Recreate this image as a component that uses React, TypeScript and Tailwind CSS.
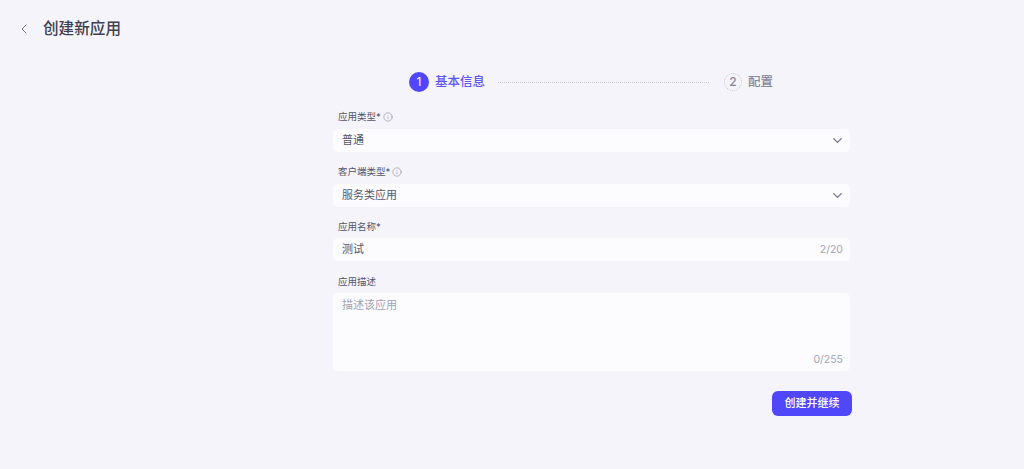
import React from "react";
import { ChevronDown, ChevronLeft, Info } from "lucide-react";

const FONT = "font-['Inter','Noto_Sans_CJK_SC',sans-serif]";

function Label({ text, info }: { text: string; info?: boolean }) {
  return (
    <div className="flex items-center h-[13px] pl-[5px] gap-[2px] text-[9.5px] leading-[13px] text-[#55566a]">
      <span>{text}</span>
      {info && <Info size={10} strokeWidth={1.25} className="text-[#77788a]" />}
    </div>
  );
}

function Select({ value }: { value: string }) {
  return (
    <div className="flex items-center justify-between h-[23px] mt-[6px] pl-[9px] pr-[5px] rounded-[5px] bg-[#fcfcfe] text-[11px] text-[#55566a]">
      <span>{value}</span>
      <ChevronDown size={15} strokeWidth={2.25} className="text-[#77788a]" />
    </div>
  );
}

export default function App() {
  return (
    <div className={`${FONT} w-[1024px] h-[469px] overflow-hidden bg-[#f4f4fa]`}>
      <header className="flex items-center h-[58px] pl-[16px]">
        <ChevronLeft size={16} strokeWidth={1.5} className="text-[#77788a]" />
        <h1 className="ml-[11px] text-[15.6px] font-medium text-[#3f4052]">创建新应用</h1>
      </header>

      <div className="flex items-center h-[48px] ml-[409px] w-[365px]">
        <div className="flex items-center justify-center w-[20px] h-[20px] rounded-full bg-[#5046fa] text-white text-[12px]">
          1
        </div>
        <span className="ml-[6px] text-[12.5px] font-medium text-[#5f57f6]">基本信息</span>
        <div className="ml-[13px] w-[211px] border-t border-dotted border-[#c9c9d2]" />
        <div className="ml-[15px] flex items-center justify-center w-[18px] h-[18px] rounded-full border border-dotted border-[#c4c4cc] text-[#88889a] text-[12px] font-medium">
          2
        </div>
        <span className="ml-[6px] text-[12.5px] font-medium text-[#88889a]">配置</span>
      </div>

      <form className="ml-[333px] w-[517px] mt-[4px]">
        <Label text="应用类型*" info />
        <Select value="普通" />

        <div className="mt-[13px]">
          <Label text="客户端类型*" info />
          <Select value="服务类应用" />
        </div>

        <div className="mt-[13px]">
          <Label text="应用名称*" />
          <div className="flex items-center justify-between h-[23px] mt-[5px] pl-[9px] pr-[7px] rounded-[5px] bg-[#fcfcfe] text-[11px] text-[#55566a]">
            <span>测试</span>
            <span className="text-[10.5px] text-[#a3a3b0]">2/20</span>
          </div>
        </div>

        <div className="mt-[14px]">
          <Label text="应用描述" />
          <div className="flex flex-col justify-between h-[78px] mt-[5px] pl-[9px] pr-[7px] pt-[4px] pb-[3px] rounded-[5px] bg-[#fcfcfe]">
            <span className="text-[11px] text-[#a3a3b0]">描述该应用</span>
            <span className="self-end text-[10.5px] text-[#a3a3b0]">0/255</span>
          </div>
        </div>

        <div className="flex justify-end mt-[20px] -mr-[2px]">
          <button
            type="button"
            className="w-[80px] h-[25px] rounded-[6px] bg-[#5046fa] text-white text-[11px] font-medium"
          >
            创建并继续
          </button>
        </div>
      </form>
    </div>
  );
}
